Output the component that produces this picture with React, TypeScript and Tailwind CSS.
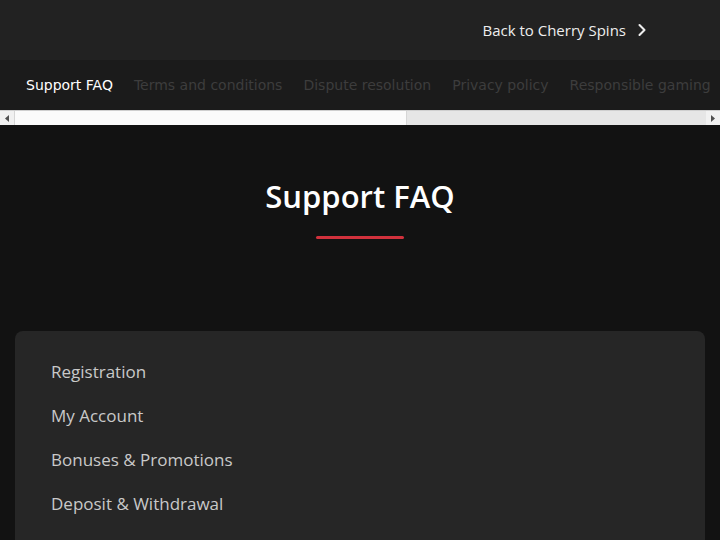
import { ChevronRight } from "lucide-react";

const TABS = [
  "Support FAQ",
  "Terms and conditions",
  "Dispute resolution",
  "Privacy policy",
  "Responsible gaming",
  "Bonus policy",
  "Cookie policy",
  "AML policy",
  "KYC policy",
  "Contact us",
];

const TOPICS = ["Registration", "My Account", "Bonuses & Promotions", "Deposit & Withdrawal", "Games"];

function Arrow({ dir }: { dir: "left" | "right" }) {
  return (
    <div className="flex w-[14px] items-center justify-center bg-[#f1f1f1]">
      <svg width="4" height="7" viewBox="0 0 4 7">
        {dir === "left" ? <path d="M4 0 L0 3.5 L4 7 Z" fill="#505050" /> : <path d="M0 0 L4 3.5 L0 7 Z" fill="#505050" />}
      </svg>
    </div>
  );
}

// fake classic scrollbar under the tab strip
function Scrollbar() {
  return (
    <div className="flex h-[15px] border-t border-[#cfcfcf] bg-[#e6e6e6]">
      <Arrow dir="left" />
      <div className="w-[393px] border-x border-[#d6d6d6] bg-[#fbfbfb]" />
      <div className="flex-1" />
      <Arrow dir="right" />
    </div>
  );
}

export default function App() {
  return (
    <div className="min-h-screen bg-[#121212] font-['Open_Sans',sans-serif]">
      <header className="flex h-[60px] items-center justify-end bg-[#222222] pr-[68px]">
        <a className="flex items-center gap-[6px] text-[15px] text-[#eeeeee]">
          Back to Cherry Spins
          <ChevronRight className="h-[20px] w-[20px]" strokeWidth={2.5} />
        </a>
      </header>

      <nav className="overflow-hidden bg-[#1b1b1b]">
        <ul className="flex h-[50px] w-max items-center gap-[21px] px-[26px] font-['DejaVu_Sans',sans-serif] text-[14px]">
          {TABS.map((t, i) => (
            <li key={t} className={i === 0 ? "text-white" : "text-[#3d3d3d]"}>
              {t}
            </li>
          ))}
        </ul>
      </nav>
      <Scrollbar />

      <main className="flex flex-col items-center pt-[49px]">
        <h1 className="text-[31px] font-semibold leading-[44px] text-white">Support FAQ</h1>
        <div className="mt-[18px] h-[3px] w-[88px] rounded-full bg-[#d1313c]" />

        <section className="mt-[92px] w-[690px] rounded-[8px] bg-[#262626] px-[36px] pt-[27px] pb-[20px]">
          <ul className="flex flex-col">
            {TOPICS.map((t) => (
              <li key={t} className="h-[44px] text-[17px] leading-[28px] text-[#c9c9c9]">
                {t}
              </li>
            ))}
          </ul>
        </section>
      </main>
    </div>
  );
}
